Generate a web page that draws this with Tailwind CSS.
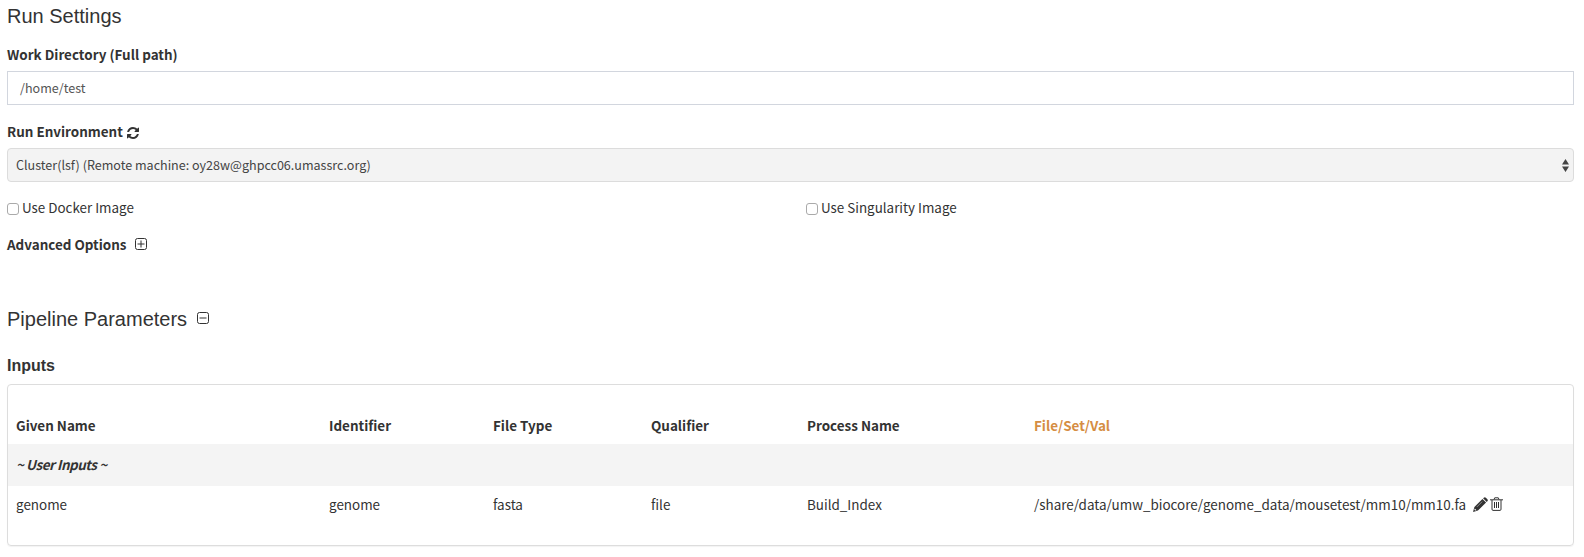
<!DOCTYPE html>
<html lang="en">
<head>
<meta charset="utf-8">
<title>Run Settings</title>
<script src="https://cdn.jsdelivr.net/npm/@tailwindcss/browser@4"></script>
</head>
<body class="h-[557px] overflow-hidden bg-white font-['Noto_Sans_CJK_SC',sans-serif] text-[13.45px] leading-5 text-[#333]">
<main class="flex flex-col pl-[7px] pr-2.5">
  <h3 class="mt-1 h-6 font-['Liberation_Sans',sans-serif] text-[20px] leading-6">Run Settings</h3>

  <label class="mt-4 h-5 font-bold">Work Directory (Full path)</label>
  <div class="mt-[7px] flex h-[34px] items-center border border-[#d2d6de] px-3 text-[12.55px] text-[#555]">/home/test</div>

  <div class="mt-4 flex h-5 items-center font-bold">Run Environment
    <svg class="ml-1 mt-[3px] size-3" viewBox="0 0 1536 1536" fill="#333"><path d="M1511 928q0 5-1 7-64 268-268 434.500t-478 166.500q-146 0-282.500-55t-243.500-157l-129 129q-19 19-45 19t-45-19-19-45V960q0-26 19-45t45-19h448q26 0 45 19t19 45-19 45l-137 137q71 66 161 102t187 36q134 0 250-65t186-179q11-17 53-117 8-23 30-23h192q13 0 22.500 9.500t9.500 22.500zM1536 128v448q0 26-19 45t-45 19H1024q-26 0-45-19t-19-45 19-45l138-138Q969 256 768 256q-134 0-250 65T332 500q-11 17-53 117-8 23-30 23H50q-13 0-22.500-9.500T18 608v-7q65-268 270-434.500T768 0q146 0 284 55.500T1297 212l130-129q19-19 45-19t45 19 19 45z"/></svg>
  </div>
  <div class="mt-[7px] flex h-[34px] items-center justify-between rounded border border-[#dcdcdc] bg-[#f3f3f3] pl-2 pr-1 text-[12.55px] text-[#444]">
    <span>Cluster(lsf) (Remote machine: oy28w@ghpcc06.umassrc.org)</span>
    <svg class="h-[13px] w-[7px]" viewBox="0 0 7 13" fill="#444"><path d="M3.500 0L7 5.500H0zM0 7.500h7L3.500 13z"/></svg>
  </div>

  <div class="mt-[15px] grid h-5 grid-cols-[799px_1fr] text-[13.4px]">
    <label class="flex items-center gap-[3px]"><span class="mt-[3px] size-3 rounded-[3px] border border-[#aaa] bg-white"></span>Use Docker Image</label>
    <label class="flex items-center gap-[3px]"><span class="mt-[3px] size-3 rounded-[3px] border border-[#aaa] bg-white"></span>Use Singularity Image</label>
  </div>

  <div class="mt-[17px] flex h-5 items-center font-bold">Advanced Options
    <svg class="ml-2 size-3" viewBox="0 0 12 12" fill="none" stroke="#333"><rect x=".5" y=".5" width="11" height="11" rx="2"/><path d="M2.500 6h7M6 2.500v7"/></svg>
  </div>

  <h3 class="mt-[53px] flex h-6 items-center font-['Liberation_Sans',sans-serif] text-[20px] leading-6">Pipeline Parameters
    <svg class="mb-0.5 ml-2.5 size-3" viewBox="0 0 12 12" fill="none" stroke="#333"><rect x=".5" y=".5" width="11" height="11" rx="2"/><path d="M2.500 6h7"/></svg>
  </h3>

  <h4 class="mt-[23px] h-6 font-['Liberation_Sans',sans-serif] text-[16px] font-bold leading-6">Inputs</h4>

  <section class="mt-[6px] h-[162px] rounded border border-[#ddd] pt-5 shadow-[0_1px_1px_rgba(0,0,0,0.05)]">
    <div class="grid h-[39px] grid-cols-[313px_164px_158px_156px_227px_1fr] items-center pl-2 font-bold">
      <span>Given Name</span><span>Identifier</span><span>File Type</span><span>Qualifier</span><span>Process Name</span><span class="text-[#d58d43]">File/Set/Val</span>
    </div>
    <div class="flex h-[42px] items-center bg-[#f4f4f4] pb-0.5 pl-2 text-[13.4px] font-bold italic tracking-[-0.45px]">~ User Inputs ~</div>
    <div class="grid h-9 grid-cols-[313px_164px_158px_156px_227px_1fr] items-center pl-2">
      <span>genome</span><span>genome</span><span>fasta</span><span>file</span><span>Build_Index</span>
      <span class="flex items-center">/share/data/umw_biocore/genome_data/mousetest/mm10/mm10.fa
        <svg class="ml-[7px] size-[15px]" viewBox="0 0 14 14" fill="#333"><path d="M8.800 1.800l3.400 3.400L4.600 12.700 0 14l1.300-4.700zM10.100.600q.9-.9 1.900 0l1.400 1.400q.9 1 0 1.900l-.6.700L9.400 1.200z"/><path d="M1.700 10.700l1.600 1.600-1.300.4-.7-.7z" fill="#fff"/><path d="M3.600 9.300l5-5" stroke="#fff" stroke-width=".4"/></svg>
        <svg class="ml-0.5 h-[14px] w-[13px]" viewBox="0 0 13 14" fill="none" stroke="#333"><path d="M0 2.800h13M4 2.500l.7-1.700h3.600L9 2.500M2 3v9.200q0 1.200 1 1.200h7q1 0 1-1.200V3M4.500 5v6M6.500 5v6M8.500 5v6"/></svg>
      </span>
    </div>
  </section>
</main>
</body>
</html>
